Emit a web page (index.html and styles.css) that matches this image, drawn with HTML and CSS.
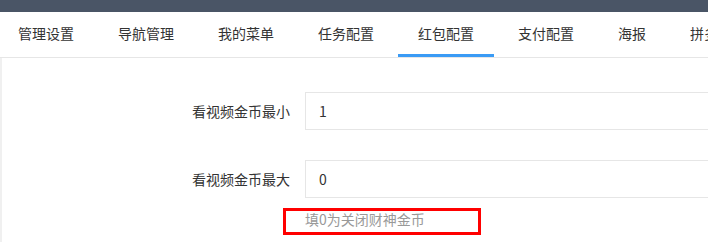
FILE: index.html
```html
<!DOCTYPE html>
<html lang="zh-CN">
<head>
  <meta charset="UTF-8">
  <title>红包配置</title>
  <link rel="stylesheet" href="styles.css">
</head>
<body>
  <div class="topbar"></div>

  <ul class="tabs">
    <li>管理设置</li>
    <li>导航管理</li>
    <li>我的菜单</li>
    <li>任务配置</li>
    <li class="active">红包配置</li>
    <li>支付配置</li>
    <li>海报</li>
    <li>拼多多</li>
  </ul>

  <div class="content">
    <div class="form-item">
      <label class="form-label">看视频金币最小</label>
      <input class="form-input" type="text" value="1">
    </div>
    <div class="form-item last">
      <label class="form-label">看视频金币最大</label>
      <input class="form-input" type="text" value="0">
    </div>
    <div class="hint-row">
      <div class="form-label"></div>
      <div class="hint-box">
        <span class="hint">填0为关闭财神金币</span>
        <span class="mark"></span>
      </div>
    </div>
  </div>
</body>
</html>
```

FILE: styles.css
```css
html, body {
  margin: 0;
  padding: 0;
  overflow: hidden;
  background-color: #ffffff;
  font-family: "Noto Sans CJK SC", "Liberation Sans", sans-serif;
  font-size: 14px;
  line-height: 20px;
  color: #333333;
}

.topbar {
  height: 12px;
  background-color: #4a5566;
}

.tabs {
  display: flex;
  gap: 4px;
  height: 45px;
  margin: 0;
  padding: 0;
  margin-left: -2px;
  list-style: none;
  white-space: nowrap;
  overflow: hidden;
  border-bottom: 1px solid #e6e6e6;
}

.tabs li {
  position: relative;
  padding: 0 20px;
  line-height: 42px;
  color: #333333;
  flex-shrink: 0;
}

.tabs li.active::after {
  content: "";
  position: absolute;
  left: 0;
  right: 0;
  bottom: 0;
  height: 3px;
  background-color: #3a9bf5;
}

.content {
  border-left: 2px solid #f0f0f0;
  padding-top: 34px;
  height: 150px;
}

.form-item {
  display: flex;
  align-items: center;
  margin-bottom: 30px;
}

.form-item.last {
  margin-bottom: 0;
}

.form-label {
  width: 303px;
  box-sizing: border-box;
  padding-right: 15px;
  text-align: right;
  flex-shrink: 0;
}

.form-input {
  width: 500px;
  height: 38px;
  box-sizing: border-box;
  flex-shrink: 0;
  padding: 0 0 0 13px;
  border: 1px solid #e6e6e6;
  font-family: inherit;
  font-size: 14px;
  color: #333333;
  outline: none;
}

.hint-row {
  display: flex;
  margin-top: 11px;
}

.hint-box {
  position: relative;
}

.hint {
  color: #999999;
}

/* red annotation frame drawn over the hint */
.mark {
  position: absolute;
  left: -22px;
  top: -1px;
  width: 198px;
  height: 27px;
  box-sizing: border-box;
  border: 3px solid #ff0000;
}
```
